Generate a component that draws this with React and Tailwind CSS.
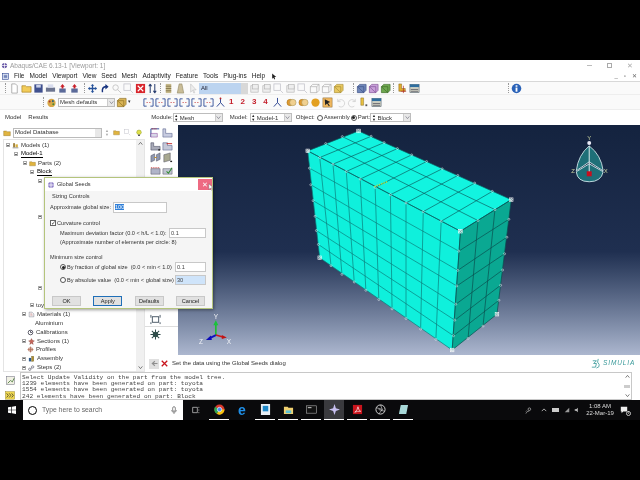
import React from "react";

const P = (x, y) => [220 + x / 3, 120 + y / 3];

// mesh nodes read off the picture, [x, y] in the zoomed crop
const frontTop = [[262,90],[298,110],[338,130],[378,152],[420,175],[465,200],[511,222],[558,247],[610,273],[664,302],[722,332]].map(([x,y]) => P(x,y));
const frontBottom = [[298,412],[332,436],[365,462],[402,485],[437,510],[476,538],[516,566],[558,595],[602,627],[648,658],[697,690]].map(([x,y]) => P(x,y));
const leftEdge = [[262,90],[267,142],[271,192],[278,240],[284,287],[288,330],[294,372],[298,412]].map(([x,y]) => P(x,y));
const midEdge = [[722,332],[717,392],[714,450],[711,497],[708,552],[705,600],[701,647],[697,690]].map(([x,y]) => P(x,y));
const rightEdge = [[875,237],[868,296],[862,350],[855,400],[849,449],[843,495],[838,540],[832,582]].map(([x,y]) => P(x,y));
const rightBottom = [[697,690],[745,655],[790,618],[832,582]].map(([x,y]) => P(x,y));
const rightTop = [[722,332],[775,300],[826,267],[875,237]].map(([x,y]) => P(x,y));
const backLeft = [[262,90],[316,68],[366,47],[415,30]].map(([x,y]) => P(x,y));
const backRight = [[415,30],[453,46],[492,65],[532,83],[575,102],[620,122],[667,144],[714,164],[765,187],[818,212],[875,237]].map(([x,y]) => P(x,y));

const poly = (...pts) => pts.map((p) => p.join(",")).join(" ");

const Seg = ({ a, b, c }) => <line x1={a[0]} y1={a[1]} x2={b[0]} y2={b[1]} stroke={c} strokeWidth="0.7" />;

const Viewport = () => (
  <svg viewBox="178 124 462 231" className="absolute inset-0 w-full h-full">
    <polygon points={poly(backLeft[0], backLeft[3], backRight[10], midEdge[0])} fill="#12f4e0" />
    <polygon points={poly(leftEdge[0], midEdge[0], midEdge[7], leftEdge[7])} fill="#0ff0dc" />
    <polygon points={poly(midEdge[0], rightEdge[0], rightEdge[7], midEdge[7])} fill="#0aa892" />
    {frontTop.map((p, i) => <Seg key={"f" + i} a={p} b={frontBottom[i]} c="#0b7f7c" />)}
    {leftEdge.map((p, i) => <Seg key={"h" + i} a={p} b={midEdge[i]} c="#0b7f7c" />)}
    {midEdge.map((p, i) => <Seg key={"r" + i} a={p} b={rightEdge[i]} c="#0a4f4f" />)}
    {rightTop.map((p, i) => <Seg key={"v" + i} a={p} b={rightBottom[i]} c="#0a4f4f" />)}
    {frontTop.map((p, i) => <Seg key={"t" + i} a={p} b={backRight[i]} c="#0a5f60" />)}
    {backLeft.map((p, i) => <Seg key={"d" + i} a={p} b={rightTop[i]} c="#0a5f60" />)}
    {[...frontTop, ...frontBottom, ...leftEdge, ...midEdge, ...rightEdge, ...rightBottom, ...rightTop, ...backLeft, ...backRight].map((p, i) => (
      <circle key={"n" + i} cx={p[0]} cy={p[1]} r="1" fill="none" stroke="#e8f4f4" strokeWidth="0.5" />
    ))}
    {[backLeft[0], backLeft[3], rightTop[3], midEdge[0], frontBottom[0], frontBottom[10], rightEdge[7]].map((p, i) => (
      <rect key={"c" + i} x={p[0] - 1.8} y={p[1] - 1.8} width="3.6" height="3.6" fill="none" stroke="#ffffff" strokeWidth="0.6" />
    ))}
    <line x1="374" y1="186" x2="387" y2="181" stroke="#a8e04a" strokeWidth="1.6" strokeDasharray="1.5 1" />

    {/* view compass */}
    <path d="M590 145 Q602 154 604 170 L590 161 L577 170 Q579 154 590 145Z" fill="#1e6f78" stroke="#cfe6ea" strokeWidth="0.9" />
    <path d="M577 171 L590 163 L604 171 Q602 181 590 181 Q578 181 577 171Z" fill="#1e6f78" stroke="#cfe6ea" strokeWidth="0.9" />
    <line x1="590" y1="145" x2="590" y2="172" stroke="#dcecef" strokeWidth="1" />
    <circle cx="590" cy="142" r="2" fill="#e8e8f4" />
    <rect x="587.5" y="170.5" width="5" height="5" fill="#c80f1e" />
    <text x="588" y="139" fontSize="6" fill="#c9d3a0" fontFamily="Liberation Sans, sans-serif">Y</text>
    <text x="572" y="172" fontSize="6" fill="#c9d3a0" fontFamily="Liberation Sans, sans-serif">Z</text>
    <text x="604.5" y="172" fontSize="6" fill="#c9d3a0" fontFamily="Liberation Sans, sans-serif">X</text>

    {/* triad */}
    <line x1="215" y1="335" x2="215" y2="324" stroke="#1cc02c" strokeWidth="1.6" />
    <polygon points="212.5,325 217.5,325 215,320" fill="#18c43a" />
    <line x1="215" y1="335" x2="222" y2="337" stroke="#d01818" strokeWidth="1.6" />
    <polygon points="221,335 226,337.5 221,339" fill="#c01414" />
    <line x1="215" y1="335" x2="209" y2="338" stroke="#1010c0" strokeWidth="1.8" />
    <polygon points="210,335.5 211,340 205,340" fill="#0c0cb8" />
    <text x="213" y="319" fontSize="6.5" fill="#f2f4f8" fontFamily="Liberation Sans, sans-serif">Y</text>
    <text x="198" y="344" fontSize="6.5" fill="#f2f4f8" fontFamily="Liberation Sans, sans-serif">Z</text>
    <text x="226" y="344" fontSize="6.5" fill="#f2f4f8" fontFamily="Liberation Sans, sans-serif">X</text>
  </svg>
);

// small toolbar glyphs, all on a 12x12 box
const glyphs = {
  doc: <path d="M3 1h4l2 2v8H3z" fill="#fff" stroke="#8a8a8a" strokeWidth=".7" />,
  open: <path d="M1 3h4l1 1h5v6H1z" fill="#f2cc5a" stroke="#a57f20" strokeWidth=".7" />,
  save: <g><rect x="1.5" y="1.5" width="9" height="9" fill="#40518f" /><rect x="3.5" y="2" width="5" height="3" fill="#c8d0e8" /></g>,
  print: <g><rect x="1" y="5" width="10" height="4.5" fill="#6d7590" /><rect x="3" y="1.5" width="6" height="3.5" fill="#d8dcee" /></g>,
  red: <g><rect x="2.5" y="6" width="7" height="4.5" fill="#5b6a99" /><path d="M6 1l2.5 3H7v2H5V4H3.5z" fill="#c91f28" /></g>,
  move: <path d="M6 1l2 2H6.7v2.3H9V4l2 2-2 2V6.7H6.7V9H8l-2 2-2-2h1.3V6.7H3V8L1 6l2-2v1.3h2.3V3H4z" fill="#26529a" />,
  rotate: <path d="M3 10Q2 4 7 3V1l3.5 3L7 7V5Q4 5.500 4.500 10z" fill="#17337f" />,
  zoom: <g fill="none" stroke="#c5c5c5" strokeWidth="1"><circle cx="5" cy="5" r="3" /><path d="M7 7l4 4" /></g>,
  zoombox: <g fill="none" stroke="#c0c0c8" strokeWidth=".8"><rect x="1" y="1" width="7" height="7" /><path d="M8 8l3 3" /></g>,
  fit: <g><rect x="1" y="1" width="10" height="10" fill="#d8252c" /><path d="M3 3l6 6M9 3l-6 6" stroke="#fff" strokeWidth="1.200" /></g>,
  updown: <path d="M3.500 1v10M3.500 1L2 3.500M3.500 1L5 3.500M8.500 11V1M8.500 11L7 8.500M8.500 11L10 8.500" stroke="#2a3f70" strokeWidth="1.100" fill="none" />,
  stack: <g><rect x="3" y="1" width="6" height="10" fill="#c6b98a" /><path d="M3 3.500h6M3 6h6M3 8.500h6" stroke="#6a5d30" strokeWidth=".7" /></g>,
  trap: <path d="M4.500 1h3l2 10h-7z" fill="#c9bd98" stroke="#8a7f58" strokeWidth=".6" />,
  arrowSel: <path d="M4 1v9l2-2 1.500 3 1-.6L7 7.500h3z" fill="#eee" stroke="#bbb" strokeWidth=".6" />,
  ghost: <g fill="#eee" stroke="#b5b5b5" strokeWidth=".7"><rect x="2" y="3" width="8" height="7" /><rect x="4" y="1.500" width="6" height="5" /></g>,
  box: <path d="M1.500 4h7v6.500h-7zM1.500 4L4 1.500h7L8.500 4M8.500 10.500L11 8V1.500" fill="none" stroke="#a8a8a8" strokeWidth=".7" />,
  boxY: <path d="M1.500 4h7v6.500h-7zM1.500 4L4 1.500h7v6.500l-2.500 2.500z" fill="#e8c860" stroke="#a68c30" strokeWidth=".7" />,
  boxB: <path d="M1.500 4h7v6.500h-7zM1.500 4L4 1.500h7v6.500l-2.500 2.500z" fill="#6f86b8" stroke="#3a4f85" strokeWidth=".7" />,
  boxP: <path d="M1.500 4h7v6.500h-7zM1.500 4L4 1.500h7v6.500l-2.500 2.500z" fill="#c8a0d8" stroke="#7e4f95" strokeWidth=".7" />,
  boxG: <path d="M1.500 4h7v6.500h-7zM1.500 4L4 1.500h7v6.500l-2.500 2.500z" fill="#6ea84f" stroke="#3c6b28" strokeWidth=".7" />,
  boxOr: <path d="M1.500 4h7v6.500h-7zM1.500 4L4 1.500h7v6.500l-2.500 2.500z" fill="#d9b456" stroke="#8a6c20" strokeWidth=".7" />,
  part: <g><path d="M2 1h3v5h4v3H2z" fill="#e0ac2c" stroke="#7a5a10" strokeWidth=".5" /><path d="M7 3v8M4 9h6" stroke="#b02020" strokeWidth=".7" /></g>,
  table: <g><rect x="1" y="1.500" width="10" height="9" fill="#d8d8c8" stroke="#456" strokeWidth=".6" /><rect x="1" y="1.500" width="10" height="3" fill="#2f6e9e" /><path d="M2 7h8M2 9h8" stroke="#445" strokeWidth=".8" /></g>,
  info: <g><circle cx="6" cy="6" r="5.200" fill="#2a62b8" /><rect x="5" y="5" width="2" height="4.500" fill="#fff" /><rect x="5" y="2.500" width="2" height="1.600" fill="#fff" /></g>,
  palette: <g><circle cx="6" cy="6.500" r="4.500" fill="#d8a848" /><circle cx="4" cy="5" r="1.100" fill="#a33" /><circle cx="7.500" cy="4.500" r="1.100" fill="#367" /><circle cx="8" cy="8" r="1.100" fill="#483" /></g>,
  tri: <path d="M6 1v5L2 10.500M6 6l4 4.500" stroke="#26408f" strokeWidth="1" fill="none" />,
  triRed: <g><path d="M6 1v5L2 10.500M6 6l4 4.500" stroke="#26408f" strokeWidth="1" fill="none" /><circle cx="6" cy="1.500" r="1" fill="#c02020" /></g>,
  axisRed: <g><path d="M1 10V2h3M11 10V2H8M1 10h3M8 10h3" stroke="#1f3f8f" strokeWidth=".9" fill="none" /><path d="M4 6h1M7 6h1" stroke="#c02020" strokeWidth="1" /></g>,
  sph: <g><circle cx="4.500" cy="6" r="3.500" fill="#e09a30" stroke="#9a6a10" strokeWidth=".5" /><circle cx="7.500" cy="6" r="3.500" fill="#f0d090" stroke="#9a8a50" strokeWidth=".5" /></g>,
  ball: <circle cx="6" cy="6" r="4.500" fill="#e3a020" />,
  cursor: <g><rect x="1" y="1" width="10" height="10" fill="#f0b860" stroke="#7a5a20" strokeWidth=".5" /><path d="M3 2.500l6 3-2.500 1L8.500 9.500l-1 .7L5.500 7.200 3.500 9z" fill="#222" /></g>,
  undo: <path d="M3 5a4 4 0 1 1 1 5M3 2v3h3" fill="none" stroke="#d0d0d0" strokeWidth=".9" />,
  redo: <path d="M9 5a4 4 0 1 0-1 5M9 2v3H6" fill="none" stroke="#d0d0d0" strokeWidth=".9" />,
  flask: <g><path d="M2 1h3v8H2z" fill="#e8c040" stroke="#80661a" strokeWidth=".5" /><rect x="7" y="8" width="2" height="2" fill="#555" /></g>,
  seedA: <g><path d="M1 11V2h9" fill="none" stroke="#26408f" strokeWidth="1" /><path d="M1 7h7v4H1z" fill="#d8d8e8" stroke="#607" strokeWidth=".4" /><path d="M2 2l6 0" stroke="#c02020" strokeWidth="1" strokeDasharray="1 1" /></g>,
  seedB: <g><path d="M1 11V2h3v5h7v4z" fill="#c8cce0" stroke="#56608a" strokeWidth=".6" /></g>,
  seedC: <g><path d="M1 11V3h3v4h7v4z" fill="#a8aab8" stroke="#44485e" strokeWidth=".6" /><rect x="9" y="10" width="2" height="1.500" fill="#222" /></g>,
  seedD: <g><path d="M1 11V3h5v3h5v5z" fill="#c4c8d8" stroke="#56608a" strokeWidth=".6" /><path d="M5 4h6" stroke="#c02020" strokeWidth="1" /></g>,
  hex: <g><path d="M1 4l4-2v7l-4 2zM7 3l4-2v7l-4 2z" fill="#8f98b0" stroke="#445" strokeWidth=".5" /><path d="M5 6h2" stroke="#c80" strokeWidth="1" /></g>,
  hexB: <g><path d="M2 3l7-2v8l-7 2z" fill="#a8a890" stroke="#445" strokeWidth=".5" /><rect x="9" y="9.500" width="2" height="1.500" fill="#222" /></g>,
  mq: <g><path d="M1 10V4h10v6z" fill="#b0b4c8" stroke="#445" strokeWidth=".5" /><path d="M1 3h10" stroke="#c02020" strokeWidth="1" strokeDasharray="1 1" /></g>,
  chk: <g><path d="M1 10V4h10v6z" fill="#c0c4d0" stroke="#445" strokeWidth=".5" /><path d="M5 7l2 2 4-6" stroke="#2a8a2a" strokeWidth="1.100" fill="none" /></g>,
  cage: <g fill="none" stroke="#2e3f4e" strokeWidth=".9"><rect x="2.500" y="3" width="7" height="6" /><path d="M1 1v3M11 1v3M1 9v2M11 9v2" /></g>,
  gear: <g fill="#2f5a4a"><circle cx="6" cy="6" r="3" /><path d="M6 .5v11M.5 6h11M2 2l8 8M10 2l-8 8" stroke="#2f4a4a" strokeWidth="1.100" /></g>,
  bulb: <g><circle cx="6" cy="5" r="3.500" fill="#dfe04a" stroke="#7f8a20" strokeWidth=".6" /><rect x="4.500" y="8.500" width="3" height="2" fill="#556" /></g>,
  tree: <g><rect x="2" y="2" width="3" height="7" fill="#9a7a30" /><rect x="6" y="4" width="4" height="5" fill="#d8b040" /><path d="M1 10h10" stroke="#333" strokeWidth=".8" /></g>,
  folder: <path d="M1 3h4l1 1h5v6H1z" fill="#e0b440" stroke="#7a5a10" strokeWidth=".5" />,
  mat: <g><path d="M2 2h5l3 3v5H2z" fill="#f4f4f4" stroke="#667" strokeWidth=".7" /><path d="M4 5h3M4 7h4" stroke="#b55" strokeWidth=".7" /></g>,
  clock: <g fill="none" stroke="#223" strokeWidth="1.200"><circle cx="6" cy="6" r="4" /><path d="M6 3v3h2.500" /></g>,
  sect: <g><path d="M6 1l1.500 3L11 5 8 7l1 4-3-2-3 2 1-4-3-2 3.500-1z" fill="#c8665a" stroke="#6a2a20" strokeWidth=".5" /></g>,
  prof: <path d="M1 6h10M6 1v10M3 3.500h6v5H3z" stroke="#b06a50" strokeWidth="1.300" fill="none" />,
  asm: <g><rect x="1.500" y="5" width="4" height="6" fill="#2e5a8a" /><rect x="6" y="2" width="4" height="9" fill="#b08f30" stroke="#443" strokeWidth=".4" /></g>,
  steps: <g><circle cx="3" cy="9" r="2" fill="none" stroke="#334" strokeWidth=".9" /><circle cx="8" cy="5" r="2" fill="none" stroke="#334" strokeWidth=".9" /><path d="M5 8l2-2" stroke="#446" /></g>,
  back: <path d="M10 6H4M6.500 3L3 6l3.500 3" stroke="#8f8f8f" strokeWidth="1.400" fill="none" />,
  cross: <path d="M3 3l6 6M9 3l-6 6" stroke="#c8141c" strokeWidth="1.400" />,
  msg: <g><rect x="1.500" y="1.500" width="9" height="9" fill="#f0f0e4" stroke="#778" strokeWidth=".6" /><path d="M3 9l3-3 2 1.500 2-4" stroke="#4a7a3a" strokeWidth=".9" fill="none" /></g>,
  arrowsY: <g><rect x=".5" y="2" width="11" height="9" fill="#f0d850" stroke="#8a7a20" strokeWidth=".5" /><path d="M2 4l2 2.500L2 9M5 4l2 2.500L5 9M8 4l2 2.500L8 9" fill="none" stroke="#222" strokeWidth=".8" /></g>,
};

const I = ({ k, s = 11 }) => (
  <svg viewBox="0 0 12 12" width={s} height={s} className="shrink-0">{glyphs[k]}</svg>
);

const Sep = () => <div className="w-[1px] h-[10px] mx-[2px] border-l border-dotted border-[#999] shrink-0" />;

const Combo = ({ w, children, spin }) => (
  <div className={`${w} h-[9px] flex items-center bg-white border border-[#bdbdbd] shrink-0`}>
    {spin && <span className="text-[4px] leading-[4px] w-[5px] text-center text-[#222] shrink-0">▲<br />▼</span>}
    <span className="flex-1 pl-[1px] text-[6px] leading-[8px] text-[#333] truncate">{children}</span>
    <span className="w-[7px] h-full bg-[#e8e8e8] border-l border-[#ccc] flex items-center justify-center shrink-0">
      <svg viewBox="0 0 6 4" width="5" height="3"><path d="M.5.5L3 3.500 5.500.5" fill="none" stroke="#667" strokeWidth=".8" /></svg>
    </span>
  </div>
);

const menus = ["File", "Model", "Viewport", "View", "Seed", "Mesh", "Adaptivity", "Feature", "Tools", "Plug-ins", "Help"];

const treeTop = [
  { ind: "pl-[2px]", exp: 1, icon: "tree", text: "Models (1)" },
  { ind: "pl-[10px]", exp: 1, text: "Model-1", u: true },
  { ind: "pl-[19px]", exp: 1, icon: "folder", text: "Parts (2)" },
  { ind: "pl-[26px]", exp: 1, text: "Block", u: true },
];

// these rows sit under the dialog, only their left edge shows
const treeMid = [
  { ind: "pl-[34px]", exp: 1, icon: "asm" }, { ind: "pl-[40px]", icon: "doc" }, { ind: "pl-[40px]", icon: "doc" },
  { ind: "pl-[40px]" },
  { ind: "pl-[34px]", exp: 1, icon: "part" }, { ind: "pl-[40px]" },
  { ind: "pl-[40px]", icon: "asm" }, { ind: "pl-[40px]", icon: "doc" }, { ind: "pl-[40px]", icon: "flask" },
  { ind: "pl-[40px]", icon: "boxOr" }, { ind: "pl-[40px]", icon: "save" }, { ind: "pl-[40px]" },
  { ind: "pl-[34px]", exp: 1, icon: "asm" }, { ind: "pl-[40px]", icon: "doc" },
];

const treeBottom = [
  { ind: "pl-[26px]", exp: 1, text: "toyota" },
  { ind: "pl-[18px]", exp: 1, icon: "mat", text: "Materials (1)" },
  { ind: "pl-[31px]", text: "Aluminium" },
  { ind: "pl-[23px]", icon: "clock", text: "Calibrations" },
  { ind: "pl-[18px]", exp: 1, icon: "sect", text: "Sections (1)" },
  { ind: "pl-[23px]", icon: "prof", text: "Profiles" },
  { ind: "pl-[18px]", exp: 1, icon: "asm", text: "Assembly" },
  { ind: "pl-[18px]", exp: 1, icon: "steps", text: "Steps (2)" },
];

const Row = ({ r }) => (
  <div className={`h-[8.9px] flex items-center ${r.ind} text-[6px] text-[#333] whitespace-nowrap`}>
    {r.exp && (
      <span className="w-[4px] h-[4px] border border-[#aaa] mr-[2px] shrink-0 flex items-center justify-center">
        <span className="w-[2px] h-[1px] bg-[#666]" />
      </span>
    )}
    {r.icon && <span className="mr-[2px]"><I k={r.icon} s={7} /></span>}
    {r.text && <span className={r.u ? "ml-[1px] border-b border-black leading-[7px] text-black" : ""}>{r.text}</span>}
  </div>
);

const Field = ({ w, children, hi }) => (
  <div className={`${w} h-[10px] border border-[#c8c8c8] pl-[1px] text-[5.600px] leading-[8px] text-[#444] shrink-0 ${hi ? "bg-[#cfe4fa]" : "bg-white"}`}>{children}</div>
);

const Btn = ({ children, on }) => (
  <div className={`w-[29px] h-[10px] text-[5.600px] leading-[8px] text-center text-[#222] bg-[#e1e1e1] border ${on ? "border-[#1f6fb8]" : "border-[#c8c8c8]"}`}>{children}</div>
);

const Radio = ({ on }) => (
  <span className="w-[6px] h-[6px] rounded-full border border-[#555] bg-white flex items-center justify-center shrink-0">
    {on && <span className="w-[3px] h-[3px] rounded-full bg-[#222]" />}
  </span>
);

const Dialog = () => (
  <div className="absolute left-[44px] top-[117px] w-[169px] h-[132px] bg-[#f5f5f5] border border-[#b4c47c] shadow-[1px_1px_3px_rgba(0,0,0,0.4)] text-[5.600px] text-[#333] flex flex-col whitespace-nowrap">
    <div className="h-[13px] bg-white flex items-center pl-[2px] shrink-0 relative">
      <svg viewBox="0 0 12 12" width="8" height="8" className="mr-[2px]"><circle cx="6" cy="6" r="4.500" fill="#8f7fc8" /><path d="M1 6h10M6 1v10" stroke="#fff" strokeWidth="1.200" /></svg>
      <span>Global Seeds</span>
      <div className="ml-auto w-[14px] h-[11px] bg-[#ee6a82] flex items-center justify-center text-white text-[7px] leading-none">✕</div>
      <svg viewBox="0 0 8 11" width="6" height="8" className="absolute right-[-2px] top-[5px]"><path d="M1 1v8l2-2 1.500 3 1.300-.6L4.500 6.500H7z" fill="#fff" stroke="#555" strokeWidth=".5" /></svg>
    </div>
    <div className="pl-[7px] mt-[1px] leading-[8px]">Sizing Controls</div>
    <div className="flex items-center pl-[5px] mt-[2px] h-[11px]">
      <span className="w-[63px]">Approximate global size:</span>
      <div className="w-[54px] h-[11px] border border-[#c8c8c8] bg-white pl-[1px] leading-[9px]"><span className="bg-[#2f7fd8] text-white">100</span></div>
    </div>
    <div className="flex items-center pl-[5px] mt-[6px] h-[8px] gap-[1px]">
      <span className="w-[6px] h-[6px] border border-[#666] bg-white text-[6px] leading-[4px] text-center">✓</span>
      <span>Curvature control</span>
    </div>
    <div className="flex items-center pl-[15px] mt-[1px] h-[10px]">
      <span className="w-[109px]">Maximum deviation factor (0.0 &lt; h/L &lt; 1.0):</span>
      <Field w="w-[37px]">0.1</Field>
    </div>
    <div className="pl-[15px] leading-[8px]">(Approximate number of elements per circle: 8)</div>
    <div className="pl-[5px] leading-[8px] mt-[7px]">Minimum size control</div>
    <div className="flex items-center pl-[15px] h-[10px] mt-[1px]">
      <Radio on />
      <span className="w-[109px] pl-[1px]">By fraction of global size&nbsp; (0.0 &lt; min &lt; 1.0)</span>
      <Field w="w-[31px]">0.1</Field>
    </div>
    <div className="flex items-center pl-[15px] h-[10px] mt-[3px]">
      <Radio />
      <span className="w-[109px] pl-[1px]">By absolute value&nbsp; (0.0 &lt; min &lt; global size)</span>
      <Field w="w-[31px]" hi>30</Field>
    </div>
    <div className="flex justify-between pl-[7px] pr-[7px] mt-[11px]">
      <Btn>OK</Btn><Btn on>Apply</Btn><Btn>Defaults</Btn><Btn>Cancel</Btn>
    </div>
  </div>
);

const sideIcons = [["seedA", "seedB"], ["seedC", "seedD"], ["hex", "hexB"], ["mq", "chk"]];

const bar1a = ["doc", "open", "save", "print", "red", "red"];
const bar1b = ["move", "rotate", "zoom", "zoombox", "fit", "updown"];
const bar1c = ["ghost", "ghost", "zoombox", "ghost", "zoombox", "box", "box", "boxY"];

function TaskItem({ children, active, plain }) {
  return (
    <div className={`w-[20px] h-[20px] flex items-center justify-center shrink-0 ${active ? "bg-[#3a3a3e]" : ""} ${plain ? "" : "border-b border-white"}`}>
      {children}
    </div>
  );
}

const App = () => (
  <div className="w-[640px] h-[480px] bg-black flex flex-col overflow-hidden blur-[0.3px]" style={{ fontFamily: '"Liberation Sans", sans-serif' }}>
    <div className="h-[60px] shrink-0" />

    <div className="h-[340px] bg-white flex flex-col shrink-0 relative">
      {/* title */}
      <div className="h-[11px] flex items-center pl-[1px] shrink-0">
        <svg viewBox="0 0 12 12" width="7" height="7" className="mr-[2px]"><circle cx="6" cy="6" r="4.500" fill="#6a5aa8" /><path d="M1 6h10M6 1v10" stroke="#fff" strokeWidth="1.200" /></svg>
        <span className="text-[6.500px] text-[#9a9a9a]">Abaqus/CAE 6.13-1 [Viewport: 1]</span>
        <div className="ml-auto flex items-center gap-[15px] pr-[7px] text-[#aaa]">
          <span className="w-[5px] h-[1px] bg-[#bbb]" />
          <span className="w-[5px] h-[5px] border border-[#aaa]" />
          <span className="text-[7px] leading-none">✕</span>
        </div>
      </div>

      {/* menu */}
      <div className="h-[11px] flex items-center pl-[2px] border-b border-[#d8d8d8] shrink-0 text-[6.500px] text-[#222]">
        <svg viewBox="0 0 12 12" width="7" height="7" className="mr-[5px]"><rect x="1" y="1" width="10" height="10" fill="#dfe6f4" stroke="#26408f" /><path d="M3 4h6M3 6h6M3 8h6" stroke="#26408f" /></svg>
        <div className="flex gap-[5px]">
          {menus.map((m) => <span key={m}>{m}</span>)}
        </div>
        <svg viewBox="0 0 12 12" width="7" height="7" className="ml-[6px]"><path d="M2 1v9l2-2 2 3 1-.6L6 7h3z" fill="#222" /></svg>
        <div className="ml-auto flex items-center gap-[6px] pr-[3px] text-[6px] text-[#666]">
          <span>_</span><span>▫</span><span>✕</span>
        </div>
      </div>

      {/* toolbar 1 */}
      <div className="h-[13px] flex items-center pl-[3px] shrink-0 bg-[#fafafa] border-b border-[#eee]">
        <Sep />
        <div className="flex gap-[1px] ml-[1px]">{bar1a.map((k, i) => <I key={i} k={k} />)}</div>
        <span className="w-[2px]" /><Sep />
        <div className="flex gap-[1px]">{bar1b.map((k, i) => <I key={i} k={k} />)}</div>
        <Sep />
        <I k="stack" /><span className="w-[1px]" /><I k="trap" />
        <span className="w-[1px]" /><I k="arrowSel" />
        <div className="w-[49px] h-[11px] ml-[1px] bg-[#bcd4f0] flex items-center shrink-0">
          <span className="flex-1 pl-[2px] text-[6px] text-[#223]">All</span>
          <span className="w-[7px] h-full bg-[#d8d8d8]" />
        </div>
        <div className="flex gap-[1px] ml-[1px]">{bar1c.map((k, i) => <I key={i} k={k} />)}</div>
        <span className="w-[7px]" /><Sep />
        <div className="flex gap-[1px]"><I k="boxB" /><I k="boxP" /><I k="boxG" /></div>
        <Sep /><span className="w-[1px]" />
        <div className="flex gap-[1px]"><I k="part" /><I k="table" /></div>
        <div className="ml-[86px] flex items-center"><Sep /><I k="info" /></div>
      </div>

      {/* toolbar 2 */}
      <div className="h-[14px] flex items-center shrink-0 bg-[#fafafa] pl-[41px]">
        <Sep /><I k="palette" />
        <span className="w-[1px]" />
        <Combo w="w-[57px]">Mesh defaults</Combo>
        <span className="w-[1px]" /><I k="boxOr" />
        <span className="text-[5px] text-[#333] ml-[1px]">▾</span>
        <div className="flex items-center gap-[1px] ml-[12px]">
          <I k="axisRed" /><I k="axisRed" /><I k="axisRed" /><I k="axisRed" /><I k="axisRed" /><I k="axisRed" /><I k="triRed" />
        </div>
        <div className="flex items-center ml-[3px] text-[#c41e2a] text-[8px] font-bold gap-[7px] leading-none">
          <span>1</span><span>2</span><span>3</span><span>4</span>
        </div>
        <span className="w-[4px]" /><I k="tri" />
        <span className="w-[3px]" />
        <div className="flex gap-[1px]"><I k="sph" /><I k="sph" /><I k="ball" /><I k="cursor" /></div>
        <span className="w-[2px]" />
        <div className="flex gap-[1px]"><I k="undo" /><I k="redo" /><I k="flask" /><I k="table" /></div>
      </div>

      {/* module row */}
      <div className="h-[16px] flex items-center shrink-0 text-[6px] text-[#333] border-t border-[#eee] pl-[5px]">
        <span>Model</span>
        <span className="ml-[7px]">Results</span>
        <span className="ml-[103px]">Module:</span>
        <Combo w="w-[50px]" spin>Mesh</Combo>
        <span className="ml-[7px]">Model:</span>
        <span className="w-[2px]" />
        <Combo w="w-[42px]" spin>Model-1</Combo>
        <span className="ml-[4px]">Object:</span>
        <span className="ml-[2px]"><Radio /></span>
        <span className="ml-[1px]">Assembly</span>
        <span className="ml-[1px]"><Radio on /></span>
        <span className="ml-[1px]">Part:</span>
        <Combo w="w-[41px]" spin>Block</Combo>
      </div>

      {/* middle */}
      <div className="flex-1 flex min-h-0">
        <div className="w-[145px] flex flex-col shrink-0 pl-[3px] pt-[1px]">
          <div className="h-[13px] flex items-center gap-[2px] shrink-0">
            <I k="folder" s={8} />
            <div className="w-[89px] h-[10px] flex items-center border border-[#bbb] text-[6px] text-[#333] pl-[1px]">
              <span className="flex-1">Model Database</span>
              <span className="w-[6px] h-full bg-[#e8e8e8]" />
            </div>
            <div className="flex gap-[4px] text-[#aaa] ml-[1px] items-center">
              <span className="text-[4px] leading-[4px]">▲<br />▼</span>
              <I k="folder" s={7} />
              <I k="zoombox" s={7} />
              <I k="bulb" s={8} />
            </div>
          </div>
          <div className="flex-1 flex border border-[#e4e4e4] min-h-0">
            <div className="flex-1 pt-[1px] overflow-hidden">
              {treeTop.map((r) => <Row key={r.text} r={r} />)}
              {treeMid.map((r, i) => <Row key={i} r={r} />)}
              {treeBottom.map((r) => <Row key={r.text} r={r} />)}
            </div>
            <div className="w-[8px] bg-[#f0f0f0] flex flex-col justify-between items-center py-[2px] shrink-0">
              <svg viewBox="0 0 6 4" width="5" height="3"><path d="M.5 3.500L3 .5l2.500 3" fill="none" stroke="#555" /></svg>
              <svg viewBox="0 0 6 4" width="5" height="3"><path d="M.5.5L3 3.500 5.500.5" fill="none" stroke="#555" /></svg>
            </div>
          </div>
        </div>

        <div className="flex-1 flex flex-col min-w-0">
          <div className="flex-1 flex min-h-0">
            <div className="w-[33px] shrink-0 flex flex-col items-center pt-[2px] bg-white">
              {sideIcons.map((p, i) => (
                <div key={i} className="flex gap-[1px] h-[12.500px]"><I k={p[0]} /><I k={p[1]} /></div>
              ))}
              <div className="mt-[137px] w-full flex flex-col">
                <div className="pl-[5px] pb-[1px] border-b border-[#ddd]"><I k="cage" /></div>
                <div className="pl-[5px] pt-[2px]"><I k="gear" /></div>
              </div>
            </div>
            <div className="flex-1 relative overflow-hidden bg-gradient-to-b from-[#14233f] via-[#1f2f50] via-55% to-[#acb7cf]">
              <Viewport />
            </div>
          </div>
          <div className="h-[17px] flex items-center shrink-0 text-[6px] text-[#333] pl-[4px]">
            <div className="w-[10px] h-[10px] bg-[#e0e0e0] flex items-center justify-center"><I k="back" s={9} /></div>
            <I k="cross" />
            <span className="ml-[2px]">Set the data using the Global Seeds dialog</span>
            <div className="ml-auto flex items-center w-[50px] shrink-0">
              <svg viewBox="0 0 12 12" width="11" height="11" className="shrink-0"><path d="M3 3h4M7 3L4 6h3l-1 4H2M9 1Q7 5 10 7 11 10 7 11" fill="none" stroke="#3a9a9a" strokeWidth=".9" /></svg>
              <span className="ml-[2px] text-[6.500px] italic text-[#3a9a9a] tracking-[0.9px] leading-none shrink-0">SIMULIA</span>
            </div>
          </div>
        </div>
      </div>

      {/* messages */}
      <div className="h-[28px] flex shrink-0">
        <div className="w-[20px] flex flex-col items-center pt-[3px] gap-[4px] shrink-0">
          <I k="msg" />
          <I k="arrowsY" s={10} />
        </div>
        <div className="w-[612px] border border-[#c8c8c8] relative pl-[1px] pt-[2px] shrink-0 font-['Liberation_Mono'] text-[6.170px] leading-[6.200px] text-[#444] whitespace-pre overflow-hidden">
          <div>Select Update Validity on the part from the model tree.</div>
          <div>1239 elements have been generated on part: toyota</div>
          <div>1554 elements have been generated on part: toyota</div>
          <div>242 elements have been generated on part: Block</div>
          <div className="absolute right-0 top-0 bottom-0 w-[8px] bg-white flex flex-col justify-between items-center py-[2px]">
            <svg viewBox="0 0 6 4" width="5" height="3"><path d="M.5 3.500L3 .5l2.500 3" fill="none" stroke="#555" /></svg>
            <span className="w-[6px] h-[3px] bg-[#ccc]" />
            <svg viewBox="0 0 6 4" width="5" height="3"><path d="M.5.5L3 3.500 5.500.5" fill="none" stroke="#555" /></svg>
          </div>
        </div>
      </div>

      <Dialog />
    </div>

    {/* taskbar */}
    <div className="h-[20px] bg-[#0a0a0c] flex items-center shrink-0">
      <div className="w-[23px] flex justify-center shrink-0">
        <svg viewBox="0 0 12 12" width="8" height="8"><path d="M0 2l5-.8V5.500H0zM6 1l6-1v5.500H6zM0 6.500h5v4.300L0 10zM6 6.500h6V12l-6-1z" fill="#fff" /></svg>
      </div>
      <div className="w-[160px] h-[20px] bg-white flex items-center shrink-0 pl-[5px] text-[6.800px] text-[#666]">
        <span className="w-[9px] h-[9px] rounded-full border-[1.500px] border-black mr-[5px]" />
        Type here to search
        <svg viewBox="0 0 12 12" width="8" height="8" className="ml-auto mr-[5px]"><rect x="4" y="1" width="4" height="7" rx="2" fill="none" stroke="#555" /><path d="M2.500 6a3.500 3.500 0 0 0 7 0M6 10v2" fill="none" stroke="#555" /></svg>
      </div>
      <div className="w-[23px] flex justify-center ml-[1px] shrink-0">
        <svg viewBox="0 0 12 12" width="8" height="8"><path d="M1 2h7v8H1zM9.500 2H11M9.500 6H11M9.500 10H11" fill="none" stroke="#ddd" /></svg>
      </div>
      <div className="flex items-end h-[20px] ml-[2px] gap-[3px]">
        <TaskItem>
          <svg viewBox="0 0 12 12" width="11" height="11"><circle cx="6" cy="6" r="5.500" fill="#d9382c" /><path d="M6 6L11.500 6A5.500 5.500 0 0 1 3 10.700z" fill="#f4c20d" /><path d="M6 6L3 10.700A5.500 5.500 0 0 1 1.200 3z" fill="#2da94f" /><circle cx="6" cy="6" r="2.400" fill="#4a8af4" stroke="#fff" strokeWidth=".7" /></svg>
        </TaskItem>
        <TaskItem plain>
          <span className="text-[14px] leading-none font-bold text-[#1f8fe8]">e</span>
        </TaskItem>
        <TaskItem>
          <svg viewBox="0 0 12 12" width="11" height="11"><rect x="1" y="0" width="10" height="12" fill="#e8eef4" /><rect x="3" y="2" width="6" height="6" fill="#1e88c8" /></svg>
        </TaskItem>
        <TaskItem>
          <svg viewBox="0 0 12 12" width="11" height="11"><path d="M1 3h4l1 1h5v7H1z" fill="#f0d070" /><rect x="3" y="7" width="6" height="3" fill="#5ac0d8" /></svg>
        </TaskItem>
        <TaskItem>
          <svg viewBox="0 0 12 12" width="11" height="11"><rect x=".5" y="2" width="11" height="8" fill="#111" stroke="#bbb" strokeWidth=".6" /><path d="M2 4h4" stroke="#ddd" /></svg>
        </TaskItem>
        <TaskItem active>
          <svg viewBox="0 0 12 12" width="11" height="11"><path d="M6 0l1.500 4.500L12 6 7.500 7.500 6 12 4.500 7.500 0 6l4.500-1.500z" fill="#c8c0f0" /></svg>
        </TaskItem>
        <TaskItem>
          <svg viewBox="0 0 12 12" width="11" height="11"><rect x="1" y="1" width="10" height="10" fill="#c8141c" /><path d="M3 9Q6 7 6.500 3 7 7 9.500 8 6 7.500 3 9z" fill="none" stroke="#fff" strokeWidth=".7" /></svg>
        </TaskItem>
        <TaskItem>
          <svg viewBox="0 0 12 12" width="11" height="11"><circle cx="6" cy="6" r="5" fill="none" stroke="#ddd" /><path d="M6 1L8 6 4 11M1.500 4L8 6M10.500 8L4 6" stroke="#ddd" strokeWidth=".7" fill="none" /></svg>
        </TaskItem>
        <TaskItem>
          <svg viewBox="0 0 12 12" width="11" height="11"><path d="M3 1h8L9 11H1z" fill="#a8d8d8" /></svg>
        </TaskItem>
      </div>
      <div className="ml-auto flex items-center text-[#ccc] pr-[12px]">
        <svg viewBox="0 0 8 8" width="7" height="7" className="mr-[9px]"><circle cx="5" cy="2.500" r="1.500" fill="none" stroke="#ccc" strokeWidth=".7" /><path d="M1 7.500Q2 4.500 5 4.500M1 5l1-1" fill="none" stroke="#ccc" strokeWidth=".7" /></svg>
        <svg viewBox="0 0 8 5" width="6" height="4" className="mr-[5px]"><path d="M1 4l3-3 3 3" fill="none" stroke="#ddd" /></svg>
        <span className="w-[7px] h-[4px] bg-[#ccc] mr-[5px]" />
        <svg viewBox="0 0 8 8" width="6" height="6" className="mr-[4px]"><path d="M1 7L7 1v6z" fill="#999" /></svg>
        <svg viewBox="0 0 8 8" width="6" height="6" className="mr-[5px]"><path d="M1 3h2l2-2v6L3 5H1z" fill="#ccc" /></svg>
        <div className="w-[30px] text-center text-[6px] leading-[7px] text-[#ddd] mr-[5px]">
          <div>1:08 AM</div>
          <div>22-Mar-19</div>
        </div>
        <div className="relative">
          <svg viewBox="0 0 10 10" width="8" height="8"><path d="M1 1h8v6H4L2 9V7H1z" fill="#eee" /></svg>
          <span className="absolute -right-[3px] -bottom-[2px] w-[5px] h-[5px] rounded-full border border-[#ccc] bg-black text-[3.500px] leading-[3px] text-center text-white">1</span>
        </div>
      </div>
    </div>

    <div className="h-[60px] shrink-0" />
  </div>
);

export default App;
